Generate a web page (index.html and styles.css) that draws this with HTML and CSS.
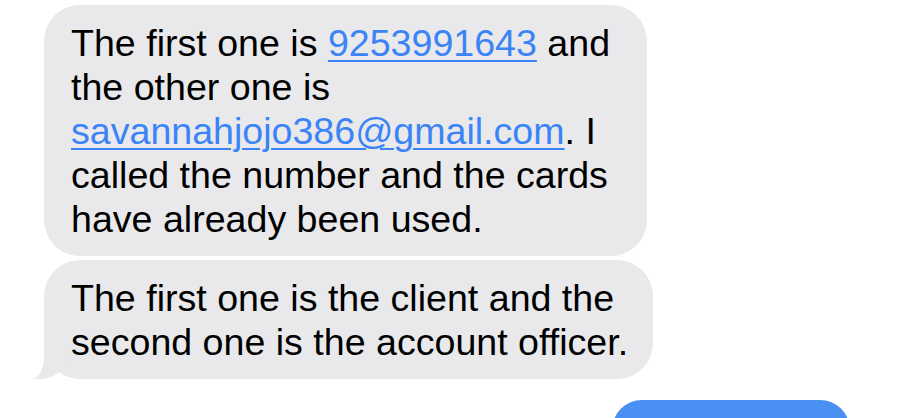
FILE: index.html
```html
<!DOCTYPE html>
<html lang="en">
<head>
<meta charset="utf-8">
<title>Messages</title>
<link rel="stylesheet" href="styles.css">
</head>
<body>
<main class="thread">
  <div class="bubble received first">The first one is <a class="link" href="#">9253991643</a> and<br>the other one is<br><a class="link" href="#">savannahjojo386@gmail.com</a>. I<br>called the number and the cards<br>have already been used.</div>
  <div class="bubble received second tail">The first one is the client and the<br>second one is the account officer.</div>
  <div class="bubble sent"></div>
</main>
</body>
</html>
```

FILE: styles.css
```css
html, body {
  margin: 0;
  padding: 0;
  background: #ffffff;
  overflow: hidden;
  height: 418px;
}

.thread {
  display: flex;
  flex-direction: column;
  gap: 4px;
  padding: 5px 50px 0 44px;
  font-family: "Liberation Sans", Arial, sans-serif;
  font-size: 37.6px;
  line-height: 44px;
  color: #000000;
}

.bubble {
  position: relative;
  box-sizing: border-box;
  border-radius: 36px;
  padding: 16px 27px 15px 27px;
  white-space: nowrap;
}

.received {
  align-self: flex-start;
  background: #e9e9eb;
}

.first {
  width: 603px;
}

.second {
  width: 609px;
  z-index: 0;
}

.link {
  color: #3a84f7;
  text-decoration: underline;
  text-decoration-thickness: 2px;
  text-underline-offset: 4px;
}

.tail::before {
  content: "";
  position: absolute;
  bottom: 0;
  left: -14px;
  width: 40px;
  height: 40px;
  background: #e9e9eb;
  border-bottom-right-radius: 30px;
  z-index: -1;
}

.tail::after {
  content: "";
  position: absolute;
  bottom: 0;
  left: -40px;
  width: 40px;
  height: 40px;
  background: #ffffff;
  border-bottom-right-radius: 12px 24px;
  z-index: -1;
}

.sent {
  align-self: flex-end;
  margin-top: 17px;
  width: 238px;
  height: 60px;
  padding: 0;
  background: #4a8ff2;
}
```
